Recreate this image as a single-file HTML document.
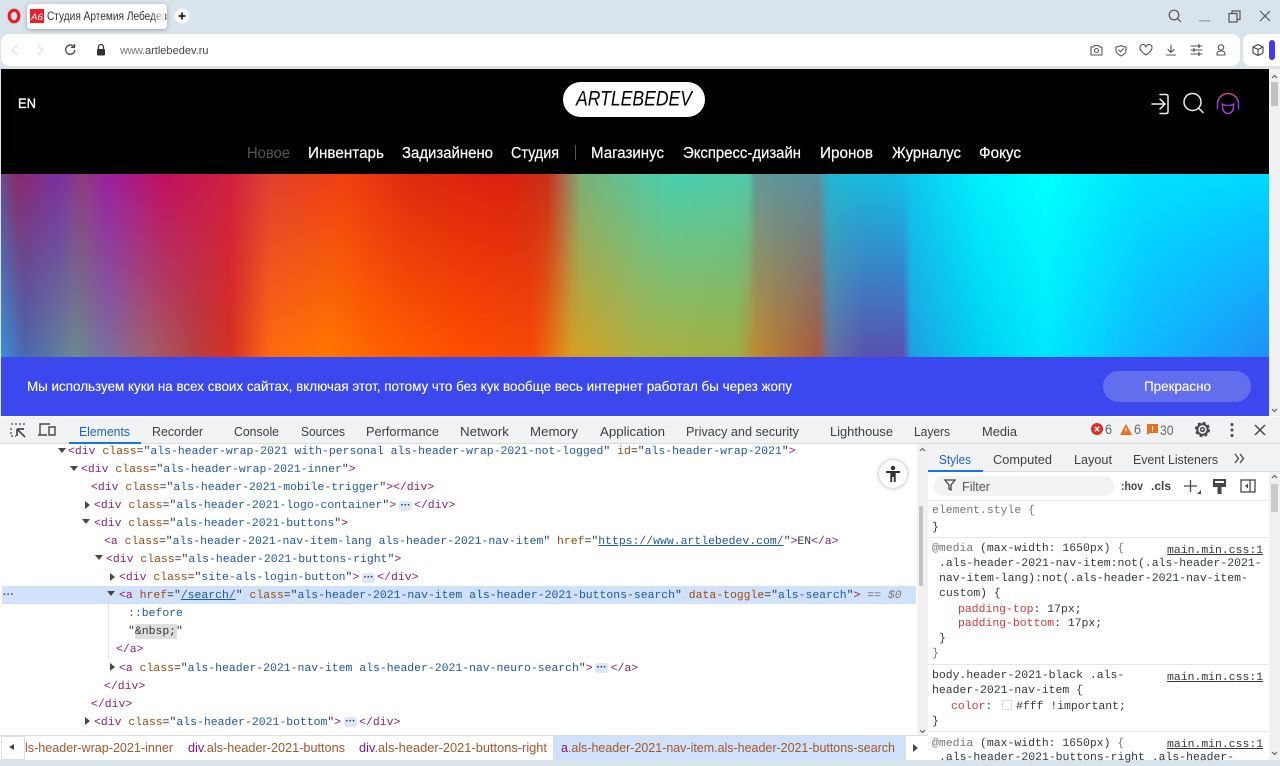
<!DOCTYPE html>
<html><head><meta charset="utf-8"><title>Студия Артемия Лебедева</title>
<style>
html,body{margin:0;padding:0;width:1280px;height:760px;overflow:hidden;background:#d9e3ec;font-family:"Liberation Sans","Noto Sans CJK SC",sans-serif}
div{position:absolute;box-sizing:border-box}
.c{font:11.45px/16px "Liberation Mono",monospace;white-space:pre;text-rendering:geometricPrecision;color:#303942;height:16px;margin-top:1px}
.c b{font-weight:normal;color:#94206f}.c i{font-style:normal;color:#9a4c12}.c u{text-decoration:none;color:#2356ad}.c s{text-decoration:underline;color:#2356ad}
.c q{quotes:none;display:inline-block;width:18px}
.r{color:#d83a3a}.g{color:#777}.l{text-decoration:underline;color:#303942}
.m{width:13px;height:10px;background:#dbe7f7;border-radius:3px;color:#333;font:bold 10px/10px "Liberation Sans",sans-serif;text-align:center;margin-top:1px}
.tr{width:0;height:0}
.d{border-top:5px solid #474747;border-left:4px solid transparent;border-right:4px solid transparent}
.f{border-left:5px solid #474747;border-top:4px solid transparent;border-bottom:4px solid transparent}
.hr{left:928px;width:340px;height:1px;background:#e6e6e6}
svg{position:absolute;left:0;top:0}
</style></head><body>
<!-- browser chrome -->
<div style="left:27px;top:4px;width:140px;height:25px;background:#fff;border-radius:4px;box-shadow:0 1px 4px rgba(60,70,90,.4)"></div>
<div style="left:1px;top:34px;width:1239px;height:32px;background:#fff;border-radius:8px"></div>
<div style="left:1243px;top:34px;width:37px;height:32px;background:#fff;border-radius:8px 0 0 8px"></div>
<div style="left:1269px;top:40px;width:6px;height:20px;background:#4a35f0;border-radius:3px"></div>
<div style="left:30px;top:9px;width:14px;height:14px;background:#e8202c"></div>
<!-- page -->
<div style="left:1px;top:69px;width:1268px;height:105px;background:#000"></div>
<div style="left:563px;top:82px;width:142px;height:35px;background:#fff;border-radius:18px"></div>
<div style="left:1px;top:174px;width:1268px;height:184px;background:linear-gradient(90deg,#3a90d8 0,#4a68b0 24px,#6a8a90 73px,#7a70a0 106px,#a06070 147px,#b84040 196px,#d83020 229px,#ff6a10 269px,#ff7800 327px,#ff6400 376px,#ff5000 457px,#f84a08 531px,#d8a020 571px,#b0b040 637px,#a0b040 735px,#c08a30 755px,#a85a40 816px,#6a70a0 829px,#5a50b0 865px,#5a50b0 902px,#20a0e0 910px,#00d0f0 980px,#00e8ff 1045px,#10b8ff 1143px,#2090f8 1265px)"></div>
<div style="left:1px;top:174px;width:1268px;height:184px;background:linear-gradient(90deg,#6a4a8a 0,#8a2a6a 16px,#7a30a0 57px,#8f3a80 82px,#9a20a0 106px,#c01060 163px,#d02040 229px,#e04030 269px,#f04010 343px,#e02a10 408px,#d82010 506px,#c83018 547px,#a86a50 563px,#78b078 580px,#48d0b0 669px,#50c8a8 747px,#609898 755px,#5a90a0 816px,#20b8d0 829px,#10c0e8 898px,#00f0ff 980px,#00ffff 1045px,#00e0ff 1143px,#00d8ff 1265px);-webkit-mask-image:linear-gradient(180deg,#000 0,rgba(0,0,0,0) 100%);mask-image:linear-gradient(180deg,#000 0,rgba(0,0,0,0) 100%)"></div>
<div style="left:1px;top:357px;width:1268px;height:59px;background:#3b48ee"></div>
<div style="left:1103px;top:371px;width:148px;height:31px;background:#636eef;border-radius:16px"></div>
<!-- scrollbar page -->
<div style="left:1269px;top:69px;width:11px;height:347px;background:#f1f1f1"></div>
<div style="left:1271px;top:82px;width:7px;height:24px;background:#c1c1c1"></div>
<!-- devtools -->
<div style="left:0;top:416px;width:1280px;height:344px;background:#fff"></div>
<div style="left:0;top:417px;width:1280px;height:27px;background:#f1f2f3;border-bottom:1px solid #dcdcdc"></div>
<div style="left:69px;top:442px;width:72px;height:2px;background:#1a73e8"></div>
<div style="left:917px;top:444px;width:11px;height:292px;background:#f1f1f1"></div>
<div style="left:919px;top:506px;width:4px;height:80px;background:#c4c4c4"></div>
<div style="left:928px;top:444px;width:352px;height:28px;background:#f1f2f3;border-bottom:1px solid #dcdcdc"></div>
<div style="left:928px;top:470px;width:55px;height:2px;background:#1a73e8"></div>
<div style="left:934px;top:476px;width:180px;height:20px;background:#f1f2f3;border-radius:10px"></div>
<div style="left:1269px;top:472px;width:11px;height:288px;background:#f1f1f1"></div>
<div style="left:1271px;top:484px;width:7px;height:28px;background:#c9c9c9"></div>
<div style="left:2px;top:586px;width:914px;height:18px;background:#d0e2fa"></div>
<div style="left:135px;top:624px;width:42px;height:15px;background:#dedede"></div>
<div style="left:108px;top:604px;width:1px;height:54px;background:#e8e8e8"></div>
<div class="hr" style="top:500px"></div><div class="hr" style="top:537px"></div><div class="hr" style="top:664px"></div><div class="hr" style="top:731px"></div>
<!-- tree -->
<div class="tr d" style="left:58px;top:448px"></div>
<div class="tr d" style="left:70px;top:466px"></div>
<div class="tr f" style="left:85px;top:501px"></div>
<div class="tr d" style="left:82px;top:519px"></div>
<div class="tr d" style="left:95px;top:555px"></div>
<div class="tr f" style="left:110px;top:573px"></div>
<div class="tr d" style="left:107px;top:591px"></div>
<div class="tr f" style="left:110px;top:663px"></div>
<div class="tr f" style="left:85px;top:717px"></div>
<div class="c" style="left:68px;top:443px"><b>&lt;div</b> <i>class</i>="<u>als-header-wrap-2021 with-personal als-header-wrap-2021-not-logged</u>" <i>id</i>="<u>als-header-wrap-2021</u>"<b>&gt;</b></div>
<div class="c" style="left:81px;top:461px"><b>&lt;div</b> <i>class</i>="<u>als-header-wrap-2021-inner</u>"<b>&gt;</b></div>
<div class="c" style="left:91px;top:479px"><b>&lt;div</b> <i>class</i>="<u>als-header-2021-mobile-trigger</u>"<b>&gt;&lt;/div&gt;</b></div>
<div class="c" style="left:94px;top:497px"><b>&lt;div</b> <i>class</i>="<u>als-header-2021-logo-container</u>"<b>&gt;</b><q></q><b>&lt;/div&gt;</b></div>
<div class="c" style="left:94px;top:515px"><b>&lt;div</b> <i>class</i>="<u>als-header-2021-buttons</u>"<b>&gt;</b></div>
<div class="c" style="left:104px;top:533px"><b>&lt;a</b> <i>class</i>="<u>als-header-2021-nav-item-lang als-header-2021-nav-item</u>" <i>href</i>="<s>https://www.artlebedev.com/</s>"<b>&gt;</b>EN<b>&lt;/a&gt;</b></div>
<div class="c" style="left:106px;top:551px"><b>&lt;div</b> <i>class</i>="<u>als-header-2021-buttons-right</u>"<b>&gt;</b></div>
<div class="c" style="left:119px;top:569px"><b>&lt;div</b> <i>class</i>="<u>site-als-login-button</u>"<b>&gt;</b><q></q><b>&lt;/div&gt;</b></div>
<div class="c" style="left:119px;top:587px"><b>&lt;a</b> <i>href</i>="<s>/search/</s>" <i>class</i>="<u>als-header-2021-nav-item als-header-2021-buttons-search</u>" <i>data-toggle</i>="<u>als-search</u>"<b>&gt;</b> <span class="g">== <em>$0</em></span></div>
<div class="c" style="left:128px;top:605px;color:#2356ad">::before</div>
<div class="c" style="left:128px;top:623px">"&amp;nbsp;"</div>
<div class="c" style="left:116px;top:641px"><b>&lt;/a&gt;</b></div>
<div class="c" style="left:119px;top:660px"><b>&lt;a</b> <i>class</i>="<u>als-header-2021-nav-item als-header-2021-nav-neuro-search</u>"<b>&gt;</b><q></q><b>&lt;/a&gt;</b></div>
<div class="c" style="left:104px;top:678px"><b>&lt;/div&gt;</b></div>
<div class="c" style="left:91px;top:696px"><b>&lt;/div&gt;</b></div>
<div class="c" style="left:94px;top:714px"><b>&lt;div</b> <i>class</i>="<u>als-header-2021-bottom</u>"<b>&gt;</b><q></q><b>&lt;/div&gt;</b></div>
<div class="m" style="left:399px;top:500px">···</div>
<div class="m" style="left:362px;top:572px">···</div>
<div class="m" style="left:595px;top:662px">···</div>
<div class="m" style="left:344px;top:716px">···</div>
<div style="left:3px;top:590px;font:bold 11px/11px 'Liberation Sans',sans-serif;color:#555">···</div>
<!-- styles -->
<div class="c g" style="left:932px;top:502px">element.style {</div>
<div class="c" style="left:932px;top:519px">}</div>
<div class="c" style="left:932px;top:540px"><span class="g">@media</span> (max-width: 1650px) <span class="g">{</span></div>
<div class="c" style="left:939px;top:555px">.als-header-2021-nav-item:not(.als-header-2021-</div>
<div class="c" style="left:939px;top:570px">nav-item-lang):not(.als-header-2021-nav-item-</div>
<div class="c" style="left:939px;top:585px">custom) {</div>
<div class="c" style="left:958px;top:601px"><span class="r">padding-top</span>: 17px;</div>
<div class="c" style="left:958px;top:615px"><span class="r">padding-bottom</span>: 17px;</div>
<div class="c" style="left:939px;top:630px">}</div>
<div class="c g" style="left:932px;top:645px">}</div>
<div class="c" style="left:932px;top:667px">body.header-2021-black .als-</div>
<div class="c" style="left:932px;top:682px">header-2021-nav-item {</div>
<div class="c" style="left:951px;top:698px"><span class="r">color</span>:</div>
<div class="c" style="left:1016px;top:698px">#fff !important;</div>
<div style="left:1002px;top:700px;width:10px;height:10px;border:1px solid #ddd;background:#fff"></div>
<div class="c" style="left:932px;top:713px">}</div>
<div class="c" style="left:932px;top:735px"><span class="g">@media</span> (max-width: 1650px) <span class="g">{</span></div>
<div class="c" style="left:939px;top:749px">.als-header-2021-buttons-right .als-header-</div>
<div class="c l" style="left:1167px;top:542px">main.min.css:1</div>
<div class="c l" style="left:1167px;top:669px">main.min.css:1</div>
<div class="c l" style="left:1167px;top:736px">main.min.css:1</div>
<!-- breadcrumbs -->
<div style="left:0;top:735px;width:928px;height:25px;background:#fff;border-top:1px solid #ddd"></div>
<div style="left:553px;top:736px;width:352px;height:24px;background:#d0e2fa"></div>
<div style="left:1px;top:736px;width:24px;height:24px;background:#fff;border:1px solid #e0e0e0"></div>
<div style="left:905px;top:736px;width:23px;height:24px;background:#fff;border-left:1px solid #e0e0e0"></div>
<div class="tr" style="left:9px;top:744px;border-right:5px solid #444;border-top:3.5px solid transparent;border-bottom:3.5px solid transparent"></div>
<div class="tr f" style="left:913px;top:744px"></div>
<!-- floating a11y button -->
<div style="left:879px;top:460px;width:28px;height:28px;border-radius:50%;background:#fff;box-shadow:0 0 4px rgba(0,0,0,.35)"></div>

<svg width="1280" height="760" viewBox="0 0 1280 760" font-family="'Liberation Sans','Noto Sans CJK SC',sans-serif">
 <defs><linearGradient id="fade" x1="0" x2="1" y1="0" y2="0"><stop offset="0" stop-color="#fff" stop-opacity="0"/><stop offset="1" stop-color="#fff"/></linearGradient>
 <linearGradient id="arch" x1="0" x2="0" y1="0" y2="1"><stop offset="0" stop-color="#d0506e"/><stop offset=".5" stop-color="#9a40c8"/><stop offset="1" stop-color="#6a3ee0"/></linearGradient></defs>
 <!-- opera -->
 <ellipse cx="14" cy="16" rx="4.800" ry="5.800" fill="none" stroke="#ee1a2e" stroke-width="3.200"/>
 <text x="31" y="20" font-size="9" font-style="italic" fill="#fff" textLength="12" lengthAdjust="spacingAndGlyphs">A6</text>
 <text x="47" y="20" font-size="12" fill="#333" textLength="120" lengthAdjust="spacingAndGlyphs">Студия Артемия Лебедев</text>
 <rect x="152" y="8" width="13" height="16" fill="url(#fade)"/>
 <circle cx="182" cy="16" r="7.500" fill="#fff"/><path d="M178.500 16h7M182 12.500v7" stroke="#222" stroke-width="1.800"/>
 <!-- win controls -->
 <g fill="none" stroke="#555" stroke-width="1.200">
  <circle cx="1174" cy="15" r="4.800"/><path d="M1177.500 18.500l3.500 3.500"/>
  <path d="M1199 20.800h11" stroke="#999"/>
  <path d="M1229 13.500h8v8.500h-8zM1232 13.500v-2.500h8v8.500h-3"/>
  <path d="M1260 11l10 10M1270 11l-10 10"/>
 </g>
 <!-- nav -->
 <g fill="none" stroke-linecap="round" stroke-linejoin="round">
  <path d="M17 45.500l-5 4.500 5 4.500M38 45.500l5 4.500-5 4.500" stroke="#d6dade" stroke-width="1.100"/>
  <path d="M74 47a4.600 4.600 0 1 0 .8 3.400M74.500 44.500v3h-3" stroke="#444" stroke-width="1.300"/>
  <path d="M98.500 49v-2a2.500 2.500 0 0 1 5 0v2" stroke="#333" stroke-width="1.200"/>
 </g>
 <rect x="97" y="49" width="8" height="6.500" rx="1" fill="#333"/>
 <text x="120" y="54" font-size="11" fill="#77797c" textLength="25">www.</text><text x="145" y="54" font-size="11" fill="#444" textLength="63.500" lengthAdjust="spacingAndGlyphs">artlebedev.ru</text>
 <g fill="none" stroke="#555" stroke-width="1.100" stroke-linejoin="round" stroke-linecap="round">
  <path d="M1091 47h2.500l1-1.500h4l1 1.500h2.500v8h-11z"/><circle cx="1096.500" cy="50.500" r="2"/>
  <path d="M1121 45.500q-3 1.500-5 1.500v3.500q0 3 5 5.500q5-2.500 5-5.500v-3.500q-2 0-5-1.500zM1118.800 50l1.700 1.800 2.800-3"/>
  <path d="M1146 55q-6-4-6-7a3 3 0 0 1 6-1a3 3 0 0 1 6 1q0 3-6 7z"/>
  <path d="M1171 45v7M1168 49.500l3 3 3-3M1166.500 55h9"/>
  <path d="M1191 46h11M1191 50h11M1191 54h11"/><path d="M1199 44.800v2.400M1194 48.800v2.400M1199 52.800v2.400" stroke-width="1.500"/>
  <circle cx="1221" cy="47.500" r="2.700"/><path d="M1217 55v-1q0-3 4-3t4 3v1z"/>
  <path d="M1258 44.500l5 2.500v6l-5 2.500-5-2.500v-6zM1253 47l5 2.500 5-2.500M1258 49.500v6" stroke="#444"/>
 </g>
 <!-- site header -->
 <text x="18" y="108" font-size="14" fill="#fff" stroke="#fff" stroke-width=".35" textLength="18" lengthAdjust="spacingAndGlyphs">EN</text>
 <text x="576" y="105.500" font-size="21" font-style="italic" fill="#000" textLength="116" lengthAdjust="spacingAndGlyphs">ARTLEBEDEV</text>
 <g fill="none" stroke="#eee" stroke-width="1.500" stroke-linecap="round" stroke-linejoin="round">
  <path d="M1160 94.500h6q2 0 2 2v15q0 2-2 2h-6M1152 104h13M1160 99l5 5-5 5"/>
  <circle cx="1192.500" cy="102" r="8.500"/><path d="M1198.500 108l4.500 4.500"/>
 </g>
 <g fill="none" stroke-width="1.500" stroke-linecap="round">
  <path d="M1217.500 109v-5a10.500 10.500 0 0 1 21 0v5" stroke="url(#arch)"/><path d="M1222 104q6 3 12 0" stroke="#8a3ed8"/><path d="M1222.500 105v2a5.500 6.500 0 0 0 11 0v-2" stroke="#a045c8"/>
 </g>
 <g font-size="15.500" fill="#fff" stroke="#fff" stroke-width=".2">
  <text x="247" y="158" fill="#555" stroke="none" textLength="43" lengthAdjust="spacingAndGlyphs">Новое</text>
  <text x="308" y="158" textLength="76" lengthAdjust="spacingAndGlyphs">Инвентарь</text>
  <text x="402" y="158" textLength="91" lengthAdjust="spacingAndGlyphs">Задизайнено</text>
  <text x="511" y="158" textLength="48" lengthAdjust="spacingAndGlyphs">Студия</text>
  <text x="591" y="158" textLength="73" lengthAdjust="spacingAndGlyphs">Магазинус</text>
  <text x="683" y="158" textLength="118" lengthAdjust="spacingAndGlyphs">Экспресс-дизайн</text>
  <text x="820" y="158" textLength="53" lengthAdjust="spacingAndGlyphs">Иронов</text>
  <text x="892" y="158" textLength="69" lengthAdjust="spacingAndGlyphs">Журналус</text>
  <text x="979" y="158" textLength="42" lengthAdjust="spacingAndGlyphs">Фокус</text>
 </g>
 <path d="M575.500 145v15" stroke="#555"/>
 <text x="27" y="391" font-size="14" fill="#fff" stroke="#fff" stroke-width=".12" textLength="765" lengthAdjust="spacingAndGlyphs">Мы используем куки на всех своих сайтах, включая этот, потому что без кук вообще весь интернет работал бы через жопу</text>
 <text x="1144" y="391" font-size="14" fill="#fff" stroke="#fff" stroke-width=".12" textLength="67" lengthAdjust="spacingAndGlyphs">Прекрасно</text>
 <!-- scroll arrows -->
 <path d="M1272 78l2.500-2.500 2.500 2.500M1272 409l2.500 2.500 2.500-2.500M1272 478l2.500-2.500 2.500 2.500M1272 752l2.500 2.500 2.500-2.500M920 451l2.500-2.500 2.500 2.500M920 730l2.500 2.500 2.500-2.500" fill="none" stroke="#666" stroke-width="1.200"/>
 <!-- devtools tabs -->
 <g font-size="13" fill="#3c4043">
  <text x="79" y="436" fill="#1a64d0" textLength="51" lengthAdjust="spacingAndGlyphs">Elements</text>
  <text x="152" y="436" textLength="51" lengthAdjust="spacingAndGlyphs">Recorder</text>
  <text x="234" y="436" textLength="45" lengthAdjust="spacingAndGlyphs">Console</text>
  <text x="301" y="436" textLength="44" lengthAdjust="spacingAndGlyphs">Sources</text>
  <text x="366" y="436" textLength="73" lengthAdjust="spacingAndGlyphs">Performance</text>
  <text x="460" y="436" textLength="49" lengthAdjust="spacingAndGlyphs">Network</text>
  <text x="530" y="436" textLength="48" lengthAdjust="spacingAndGlyphs">Memory</text>
  <text x="600" y="436" textLength="65" lengthAdjust="spacingAndGlyphs">Application</text>
  <text x="686" y="436" textLength="113" lengthAdjust="spacingAndGlyphs">Privacy and security</text>
  <text x="830" y="436" textLength="63" lengthAdjust="spacingAndGlyphs">Lighthouse</text>
  <text x="914" y="436" textLength="36" lengthAdjust="spacingAndGlyphs">Layers</text>
  <text x="982" y="436" textLength="35" lengthAdjust="spacingAndGlyphs">Media</text>
  <text x="939" y="464" fill="#1a64d0" textLength="32" lengthAdjust="spacingAndGlyphs">Styles</text>
  <text x="993" y="464" textLength="59" lengthAdjust="spacingAndGlyphs">Computed</text>
  <text x="1074" y="464" textLength="38" lengthAdjust="spacingAndGlyphs">Layout</text>
  <text x="1133" y="464" textLength="85" lengthAdjust="spacingAndGlyphs">Event Listeners</text>
  <text x="962" y="491" fill="#555" textLength="28" lengthAdjust="spacingAndGlyphs">Filter</text>
  <text x="1121" y="490" font-size="12" font-weight="bold" fill="#444" textLength="22" lengthAdjust="spacingAndGlyphs">:hov</text>
  <text x="1151" y="490" font-size="12" font-weight="bold" fill="#444" textLength="20" lengthAdjust="spacingAndGlyphs">.cls</text>
  <text x="1105" y="434" font-size="14" fill="#666" textLength="7" lengthAdjust="spacingAndGlyphs">6</text>
  <text x="1134" y="434" font-size="14" fill="#666" textLength="7" lengthAdjust="spacingAndGlyphs">6</text>
  <text x="1160" y="435" font-size="14" fill="#666" textLength="13.500" lengthAdjust="spacingAndGlyphs">30</text>
 </g>
 <!-- status icons -->
 <circle cx="1097" cy="429" r="6" fill="#d93025"/><path d="M1094.800 426.800l4.400 4.400M1099.200 426.800l-4.400 4.400" stroke="#fff" stroke-width="1.400"/>
 <path d="M1120 435l6-11 6 11z" fill="#e8711a"/><path d="M1126 428v3.500" stroke="#fff"/>
 <path d="M1147 424h11v9h-8l-3 2z" fill="#e8711a"/><path d="M1152.500 426v4M1152.500 431v1" stroke="#fff"/>
 <!-- devtools icons -->
 <g fill="none" stroke="#474747" stroke-width="1.300">
  <path d="M11 424h2M15 424h2M19 424h2M23 424h2M11 428v2M11 432v2M11 436h2M15 436h1" stroke-width="1.300"/>
  <path d="M17 429h7M17 429v7M17 429l8 8" stroke-width="1.700"/>
  <path d="M50 424h-10v11h-2M38 435h9M49 427h6v8h-6z" stroke-width="1.400"/>
  <circle cx="1202.500" cy="429.500" r="5.200" stroke-width="2"/>
  <circle cx="1202.500" cy="429.500" r="6.600" stroke-width="2" stroke-dasharray="2.900 2.300"/>
  <circle cx="1202.500" cy="429.500" r="1.900" stroke-width="1.500"/>
  <path d="M1255 425l10 10M1265 425l-10 10" stroke-width="1.500"/>
  <path d="M1235 454l3.500 4.500-3.500 4.500M1240 454l3.500 4.500-3.500 4.500"/>
  <path d="M945 480h10l-4 5v5l-2-1v-4z"/>
  <path d="M1184 486h13M1190.500 480v12" stroke-width="1.300"/>
  <rect x="1241" y="480" width="14" height="12"/><path d="M1250 480v12"/>
 </g>
 <path d="M1197 494h4v-4z" fill="#474747"/>
 <path d="M1213 479h13v8h-13z" fill="#474747"/><path d="M1215 481h9v2h-9z" fill="#fff"/><path d="M1217.500 487h4v7h-4z" fill="#474747"/>
 <path d="M1248 483.500l-3 2.500 3 2.500z" fill="#474747"/>
 <circle cx="1232" cy="424.500" r="1.500" fill="#474747"/><circle cx="1232" cy="430" r="1.500" fill="#474747"/><circle cx="1232" cy="435.500" r="1.500" fill="#474747"/>
 <!-- a11y -->
 <circle cx="893" cy="468" r="2.200" fill="#333"/><path d="M886 471h14v2h-4.300v9h-1.900v-5h-1.600v5h-1.900v-9H886z" fill="#333"/>
 <!-- breadcrumbs -->
 <g font-size="12.500">
  <text x="25" y="752" fill="#a5562a" textLength="148" lengthAdjust="spacingAndGlyphs">ls-header-wrap-2021-inner</text>
  <text x="188" y="752" fill="#a5562a" textLength="157" lengthAdjust="spacingAndGlyphs"><tspan fill="#881280">div</tspan>.als-header-2021-buttons</text>
  <text x="359" y="752" fill="#a5562a" textLength="188" lengthAdjust="spacingAndGlyphs"><tspan fill="#881280">div</tspan>.als-header-2021-buttons-right</text>
  <text x="561" y="752" fill="#a5562a" textLength="334" lengthAdjust="spacingAndGlyphs"><tspan fill="#881280">a</tspan>.als-header-2021-nav-item.als-header-2021-buttons-search</text>
 </g>
</svg>
</body></html>
